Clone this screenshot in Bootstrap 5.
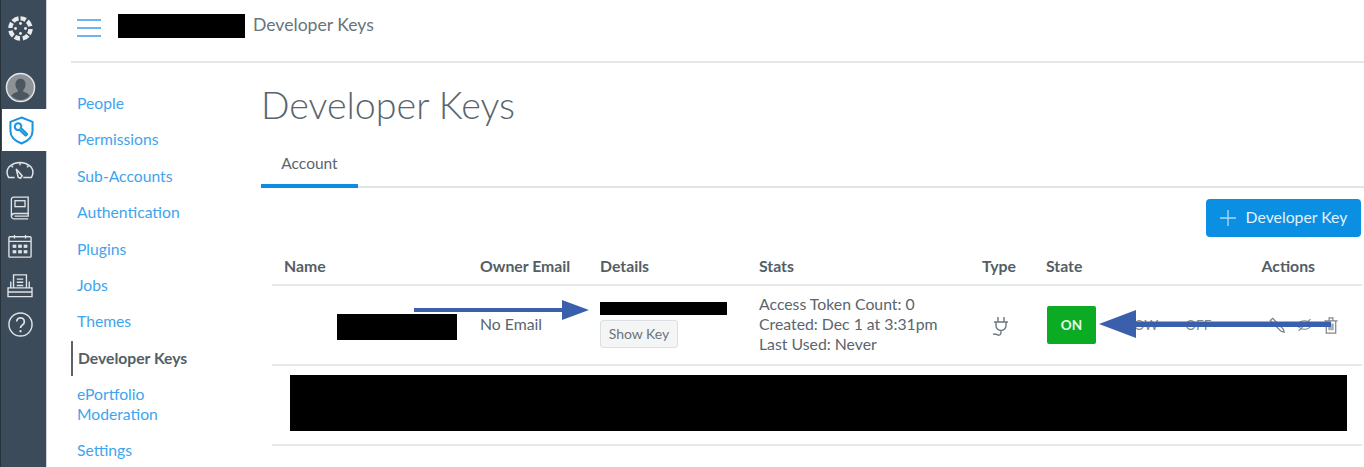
<!DOCTYPE html>
<html lang="en">
<head>
  <meta charset="UTF-8" />
  <meta name="viewport" content="width=device-width, initial-scale=1.0" />
  <title>Developer Keys</title>
  <link href="https://cdn.jsdelivr.net/npm/bootstrap@5.3.0/dist/css/bootstrap.min.css" rel="stylesheet" />
  <style>
    html, body { height: 467px; overflow: hidden; }
    body { font-family: Lato, "Liberation Sans", sans-serif; color: #4e5a63; background: #fff; font-size: 16px; }
    /* Global rail */
    .rail { width: 47px; height: 467px; flex: none; background: #3c4b59; border-left: 1px solid #28323b; border-right: 1px solid #cfd4d8; }
    .rail-item { display: flex; align-items: center; justify-content: center; color: #dfe3e6; padding-right: 7px; }
    .rail-logo { height: 57px; }
    .rail-avatar { height: 52px; padding-top: 8px; }
    .rail-active { height: 42px; background: #fff; margin: 0 -1px 0 1px; color: #1a94e0; padding-right: 6px; }
    .rail-tool { height: 38px; }
    .rail-print { height: 41px; }
    .rail-help { height: 37px; }
    /* Top bar */
    .page-col { min-width: 0; }
    .top-bar { height: 63px; margin-left: 24px; border-bottom: 2px solid #e3e7e9; padding: 0 0 10px 6px; }
    .burger { width: 24px; margin: 5px 17px 0 0; }
    .burger span { display: block; height: 2px; background: #6fb3ef; margin: 6px 0; }
    .redact { background: #000; display: block; }
    .redact-crumb { width: 127px; height: 24px; margin-right: 8px; }
    .crumb-text { font-size: 17.6px; color: #68747c; }
    /* Sub nav */
    .sub-nav { width: 190px; flex: none; margin-left: 24px; padding: 30px 50px 0 0; }
    .sub-nav a { display: block; color: #3ea4ee; text-decoration: none; font-size: 15.7px; line-height: 21px; padding: 0 0 0 6px; margin-bottom: 15.4px; }
    .sub-nav a.current { color: #535e66; font-weight: 700; border-left: 2px solid #59646c; padding: 7px 0 7px 5px; margin: -7px 0 8.4px 0; }
    .sub-nav a.wrap-link { line-height: 20px; }
    /* Content */
    .main-col { min-width: 0; }
    .page-title { font-size: 37.6px; font-weight: 300; line-height: 46px; color: #59646c; margin: 19px 0 0; }
    .tab-line { margin-top: 18px; height: 42px; border-bottom: 2px solid #dfe4e7; }
    .tab-active { width: 97px; height: 42px; border-bottom: 4px solid #0f8de0; text-align: center; font-size: 15.5px; line-height: 34px; color: #5a656d; margin-bottom: -2px; }
    .add-btn { background: #0a8fe2; color: #e3f2fc; border: 0; border-radius: 4px; width: 155px; height: 38px; font-size: 15.8px; padding: 0 0 2px; margin: 11px 3px 0 0; gap: 10px; }
    .add-btn svg { margin-top: 2px; }
    .keys-wrap { position: relative; margin: 13px 2px 0 11px; }
    .keys-table { table-layout: fixed; width: 1090px; margin: 0; color: #5a656d; }
    .keys-table col:nth-child(1) { width: 196px; }
    .keys-table col:nth-child(2) { width: 120px; }
    .keys-table col:nth-child(3) { width: 159px; }
    .keys-table col:nth-child(4) { width: 223px; }
    .keys-table col:nth-child(5) { width: 64px; }
    .keys-table col:nth-child(6) { width: 200px; }
    .keys-table th { font-size: 15.8px; font-weight: 700; color: #535e66; padding: 0 0 2px 12px; height: 35px; vertical-align: middle; border-bottom: 2px solid #e6e9eb; }
    .keys-table td { font-size: 15.8px; padding: 0 0 0 12px; border-bottom: 2px solid #e6e9eb; vertical-align: middle; }
    .key-row td { height: 80px; }
    .blank-row td { height: 80px; }
    .keys-table th.actions-head { text-align: right; padding: 0 47px 2px 0; }
    .keys-table td.text-cell { padding-bottom: 2px; }
    .redact-name { width: 120px; height: 26px; margin: 3px 0 0 53px; }
    .redact-key { width: 127px; height: 13px; margin-bottom: 5px; }
    .redact-big { width: 1057px; height: 56px; margin: 0 0 4px 18px; }
    .show-btn { background: #f4f5f5; border: 1px solid #dcdfe1; border-radius: 3px; color: #69747c; font-size: 14px; padding: 0; width: 78px; height: 28px; line-height: 26px; }
    .stats-cell { line-height: 20px; }
    .state-on { background: #0cab24; color: #e8f8ea; width: 49px; height: 38px; margin-left: 1px; border-radius: 2px; border: 0; font-size: 13.5px; font-weight: 700; padding: 0; }
    .faint-act { font-size: 13.5px; color: #7d878e; }
    .show-act { margin-left: 20px; }
    .off-act { margin-left: 27px; }
    .plug-icon { margin-left: 9px; }
    .act-icons { gap: 11px; padding-right: 24px; }
    .arrow-over { position: absolute; pointer-events: none; }
    .arrow-key { left: 142px; top: 48px; }
    .arrow-state { left: 827px; top: 60px; }
  </style>
</head>
<body class="d-flex">
  <!-- Global nav -->
  <aside class="rail">
    <div class="rail-item rail-logo">
      <svg width="29" height="29" viewBox="0 0 32 32" fill="#e9ebed">
        <path d="M16 2.500a13.500 13.500 0 0 1 7 2l-2.500 4a9 9 0 0 0-4.500-1.200z"/>
        <path d="M25 6a13.500 13.500 0 0 1 4.200 7l-4.700 1a9 9 0 0 0-2.500-4.200z"/>
        <path d="M29.500 16.500a13.500 13.500 0 0 1-2.200 7l-4-2.600a9 9 0 0 0 1.300-4.400z"/>
        <path d="M26 25a13.500 13.500 0 0 1-7 4.200l-1-4.700a9 9 0 0 0 4.300-2.500z"/>
        <path d="M15.500 29.500a13.500 13.500 0 0 1-7-2.200l2.600-4a9 9 0 0 0 4.400 1.300z"/>
        <path d="M6.500 26a13.500 13.500 0 0 1-4-7l4.700-1a9 9 0 0 0 2.400 4.300z"/>
        <path d="M2.500 15.500a13.500 13.500 0 0 1 2-7l4 2.500a9 9 0 0 0-1.300 4.500z"/>
        <path d="M6 6.500a13.500 13.500 0 0 1 7.500-4l.7 4.700a9 9 0 0 0-4.800 2.500z"/>
        <circle cx="16" cy="10.500" r="1.600"/><circle cx="21.500" cy="16" r="1.600"/><circle cx="16" cy="21.500" r="1.600"/><circle cx="10.500" cy="16" r="1.600"/>
      </svg>
    </div>
    <div class="rail-item rail-avatar">
      <svg width="31" height="31" viewBox="0 0 32 32">
        <circle cx="16" cy="16" r="14.500" fill="#8c9296" stroke="#e4e7ea" stroke-width="1.500"/>
        <path d="M16 7c3.400 0 5.200 2.600 5.200 6 0 2.500-1 4.600-2.400 5.700v1.600c2.800 1 5.600 2 6.700 4.200A14 14 0 0 1 16 29a14 14 0 0 1-9.500-4.500c1.100-2.200 3.900-3.200 6.700-4.200v-1.600C11.800 17.600 10.800 15.500 10.800 13c0-3.400 1.800-6 5.200-6z" fill="#4c565e"/>
      </svg>
    </div>
    <div class="rail-item rail-active">
      <svg width="25" height="29" viewBox="0 0 26 30" fill="none" stroke="currentColor" stroke-width="2.100">
        <path d="M13 1.500 24.500 6v9.500c0 6-5 10.500-11.500 13C6.500 26 1.500 21.500 1.500 15.500V6z"/>
        <path d="M7 8.500c1.500-1.500 3.800-1.300 5 0 1 1.200 1 2.800.3 3.800l6.200 6c.8.800-.8 2.500-1.700 1.700l-6.200-6c-1.200.6-2.700.4-3.600-.6-1.300-1.300-1.300-3.500 0-4.900z"/>
      </svg>
    </div>
    <div class="rail-item rail-tool">
      <svg width="28" height="18" viewBox="0 0 26 16" fill="none" stroke="currentColor" stroke-width="1.400">
        <path d="M8 15H2.500C1.500 13.500 1 11.500 1 10a12 9 0 0 1 24 0c0 1.500-.5 3.500-1.500 5H16"/>
        <path d="M9.500 7l5.500 6.500-1.500 2.200-2.200-1z"/>
        <path d="M13 1v2.500M5 4l1.500 1.500M21 4l-1.500 1.500"/>
      </svg>
    </div>
    <div class="rail-item rail-tool">
      <svg width="20" height="24" viewBox="0 0 22 26" fill="none" stroke="currentColor" stroke-width="1.500">
        <path d="M20 19V1H4a2.500 2.500 0 0 0-2.500 2.500V22A3 3 0 0 0 4.500 25H20"/>
        <path d="M2 21.500c0-1.500 1.200-2.500 2.800-2.500H20v3H5"/>
        <rect x="5.500" y="5" width="11" height="6.500"/>
      </svg>
    </div>
    <div class="rail-item rail-tool">
      <svg width="24" height="24" viewBox="0 0 26 26" fill="none" stroke="currentColor" stroke-width="1.500">
        <rect x="1" y="3" width="24" height="22" rx="1"/>
        <path d="M1 8h24M7 1v4M19 1v4"/>
        <g fill="currentColor" stroke="none">
          <rect x="5" y="11.500" width="4" height="3.500"/><rect x="11" y="11.500" width="4" height="3.500"/><rect x="17" y="11.500" width="4" height="3.500"/>
          <rect x="5" y="17.500" width="4" height="3.500"/><rect x="11" y="17.500" width="4" height="3.500"/><rect x="17" y="17.500" width="4" height="3.500"/>
        </g>
      </svg>
    </div>
    <div class="rail-item rail-print">
      <svg width="26" height="24" viewBox="0 0 28 26" fill="none" stroke="currentColor" stroke-width="1.500">
        <path d="M7 15V1h14v14"/>
        <path d="M10.500 5.500h7M10.500 9h7M10.500 12.500h7"/>
        <path d="M4 8v7M24 8v7"/>
        <path d="M1 15h26v9.500H1zM1 19.500h26"/>
      </svg>
    </div>
    <div class="rail-item rail-help">
      <svg width="25" height="25" viewBox="0 0 26 26" fill="none" stroke="currentColor" stroke-width="1.500">
        <circle cx="13" cy="13" r="12"/>
        <path d="M9 10a4 4 0 1 1 6 3.500c-1.400.8-2 1.500-2 3.200" stroke-width="1.800"/>
        <circle cx="13" cy="20" r="1.200" fill="currentColor" stroke="none"/>
      </svg>
    </div>
  </aside>

  <div class="page-col flex-grow-1">
    <!-- Top bar -->
    <div class="top-bar d-flex align-items-center">
      <div class="burger"><span></span><span></span><span></span></div>
      <span class="redact redact-crumb"></span>
      <span class="crumb-text">Developer Keys</span>
    </div>

    <div class="d-flex">
      <!-- Account nav -->
      <nav class="sub-nav">
        <a href="#">People</a>
        <a href="#">Permissions</a>
        <a href="#">Sub-Accounts</a>
        <a href="#">Authentication</a>
        <a href="#">Plugins</a>
        <a href="#">Jobs</a>
        <a href="#">Themes</a>
        <a href="#" class="current">Developer Keys</a>
        <a href="#" class="wrap-link">ePortfolio Moderation</a>
        <a href="#">Settings</a>
      </nav>

      <!-- Main content -->
      <main class="main-col flex-grow-1">
        <h1 class="page-title">Developer Keys</h1>
        <div class="tab-line"><div class="tab-active">Account</div></div>
        <div class="d-flex justify-content-end">
          <button class="add-btn d-flex align-items-center justify-content-center" type="button">
            <svg width="16" height="16" viewBox="0 0 16 16" stroke="#a9d8f6" stroke-width="1.400"><path d="M8 0v16M0 8h16"/></svg>
            Developer Key
          </button>
        </div>
        <div class="keys-wrap">
          <table class="table keys-table">
            <colgroup>
              <col /><col /><col /><col /><col /><col /><col />
            </colgroup>
            <thead>
              <tr><th>Name</th><th>Owner Email</th><th>Details</th><th>Stats</th><th>Type</th><th>State</th><th class="actions-head">Actions</th></tr>
            </thead>
            <tbody>
              <tr class="key-row">
                <td><span class="redact redact-name"></span></td>
                <td class="text-cell">No Email</td>
                <td>
                  <span class="redact redact-key"></span>
                  <button class="show-btn" type="button">Show Key</button>
                </td>
                <td class="stats-cell text-cell">Access Token Count: 0<br />Created: Dec 1 at 3:31pm<br />Last Used: Never</td>
                <td>
                  <svg class="plug-icon" width="19" height="21" viewBox="0 0 19 21" fill="none" stroke="#6d777f" stroke-width="1.400">
                    <path d="M7 1v5M13 1v5M3 6h14M5 6v3.500a5 5 0 0 0 10 0V6M10 14.500v2c0 2-1.500 3-3 2.500S4 17 2 18.500"/>
                  </svg>
                </td>
                <td>
                  <div class="d-flex align-items-center">
                    <button class="state-on" type="button">ON</button>
                    <span class="faint-act show-act">SHOW</span>
                    <span class="faint-act off-act">OFF</span>
                  </div>
                </td>
                <td>
                  <div class="act-icons d-flex align-items-center justify-content-end">
                    <svg width="16" height="16" viewBox="0 0 18 18" fill="none" stroke="#7d878e" stroke-width="1.500"><path d="M4 1.500l12 12 1 3.500-3.500-1L1.500 4z"/></svg>
                    <svg width="17" height="14" viewBox="0 0 20 16" fill="none" stroke="#7d878e" stroke-width="1.300"><path d="M1 8c2.500-3.500 5.500-5 9-5s6.500 1.500 9 5c-2.500 3.500-5.500 5-9 5s-6.500-1.500-9-5zM3 15 17 1"/></svg>
                    <svg width="14" height="17" viewBox="0 0 14 18" fill="none" stroke="#7d878e" stroke-width="1.300"><path d="M0 4h14M5 4V1h4v3M2 4v13h10V4M5 7v7M7 7v7M9 7v7"/></svg>
                  </div>
                </td>
              </tr>
              <tr class="blank-row">
                <td colspan="7" class="p-0"><span class="redact redact-big"></span></td>
              </tr>
            </tbody>
          </table>
          <!-- Annotation arrows on top of the table -->
          <svg class="arrow-over arrow-key" width="176" height="24" viewBox="0 0 176 24"><path d="M0 10h148v4H0z M148 2l27 10-27 10z" fill="#3a60ac"/></svg>
          <svg class="arrow-over arrow-state" width="232" height="28" viewBox="0 0 232 28"><path d="M232 11.500H36v5.500h196z M37 0 0 14l37 14z" fill="#3a60ac"/></svg>
        </div>
      </main>
    </div>
  </div>
  <script src="https://cdn.jsdelivr.net/npm/bootstrap@5.3.0/dist/js/bootstrap.bundle.min.js"></script>
</body>
</html>
